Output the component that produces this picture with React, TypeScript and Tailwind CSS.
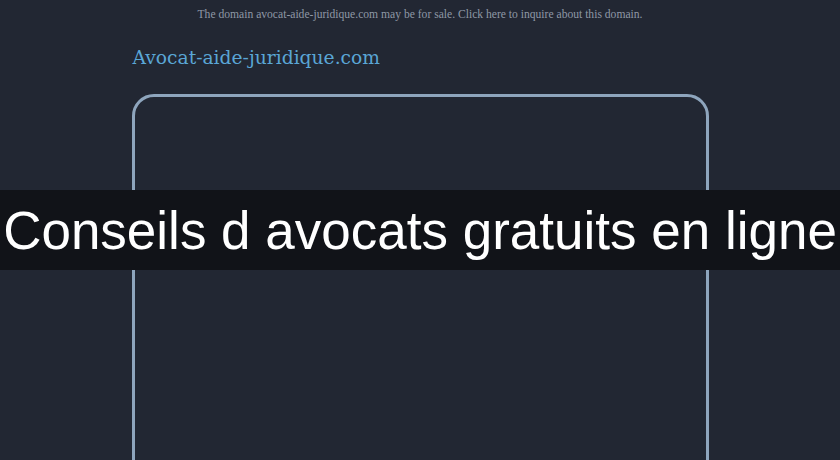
export default function App() {
  return (
    <div className="relative h-[460px] w-full overflow-hidden bg-[#222733]">
      <p className="pt-[8px] text-center font-['Liberation_Serif',serif] text-[11.6px] leading-[14px] text-[#8f98a6]">
        The domain avocat-aide-juridique.com may be for sale. Click here to inquire about this domain.
      </p>

      <div className="mx-auto w-[577px]">
        <h2 className="ml-[1px] mt-[23px] font-['DejaVu_Serif',serif] text-[18.7px] leading-[26px] text-[#5aa6d6]">
          Avocat-aide-juridique.com
        </h2>
        <div className="mt-[23px] h-[420px] rounded-[22px] border-[3px] border-[#8ea5bd]" />
      </div>

      <div className="absolute left-0 right-0 top-[190px] flex h-[80px] items-center justify-center bg-[#111318]">
        <h1 className="font-['Liberation_Sans',Arial,sans-serif] text-[53px] leading-none whitespace-nowrap text-white">
          Conseils d avocats gratuits en ligne
        </h1>
      </div>
    </div>
  );
}
